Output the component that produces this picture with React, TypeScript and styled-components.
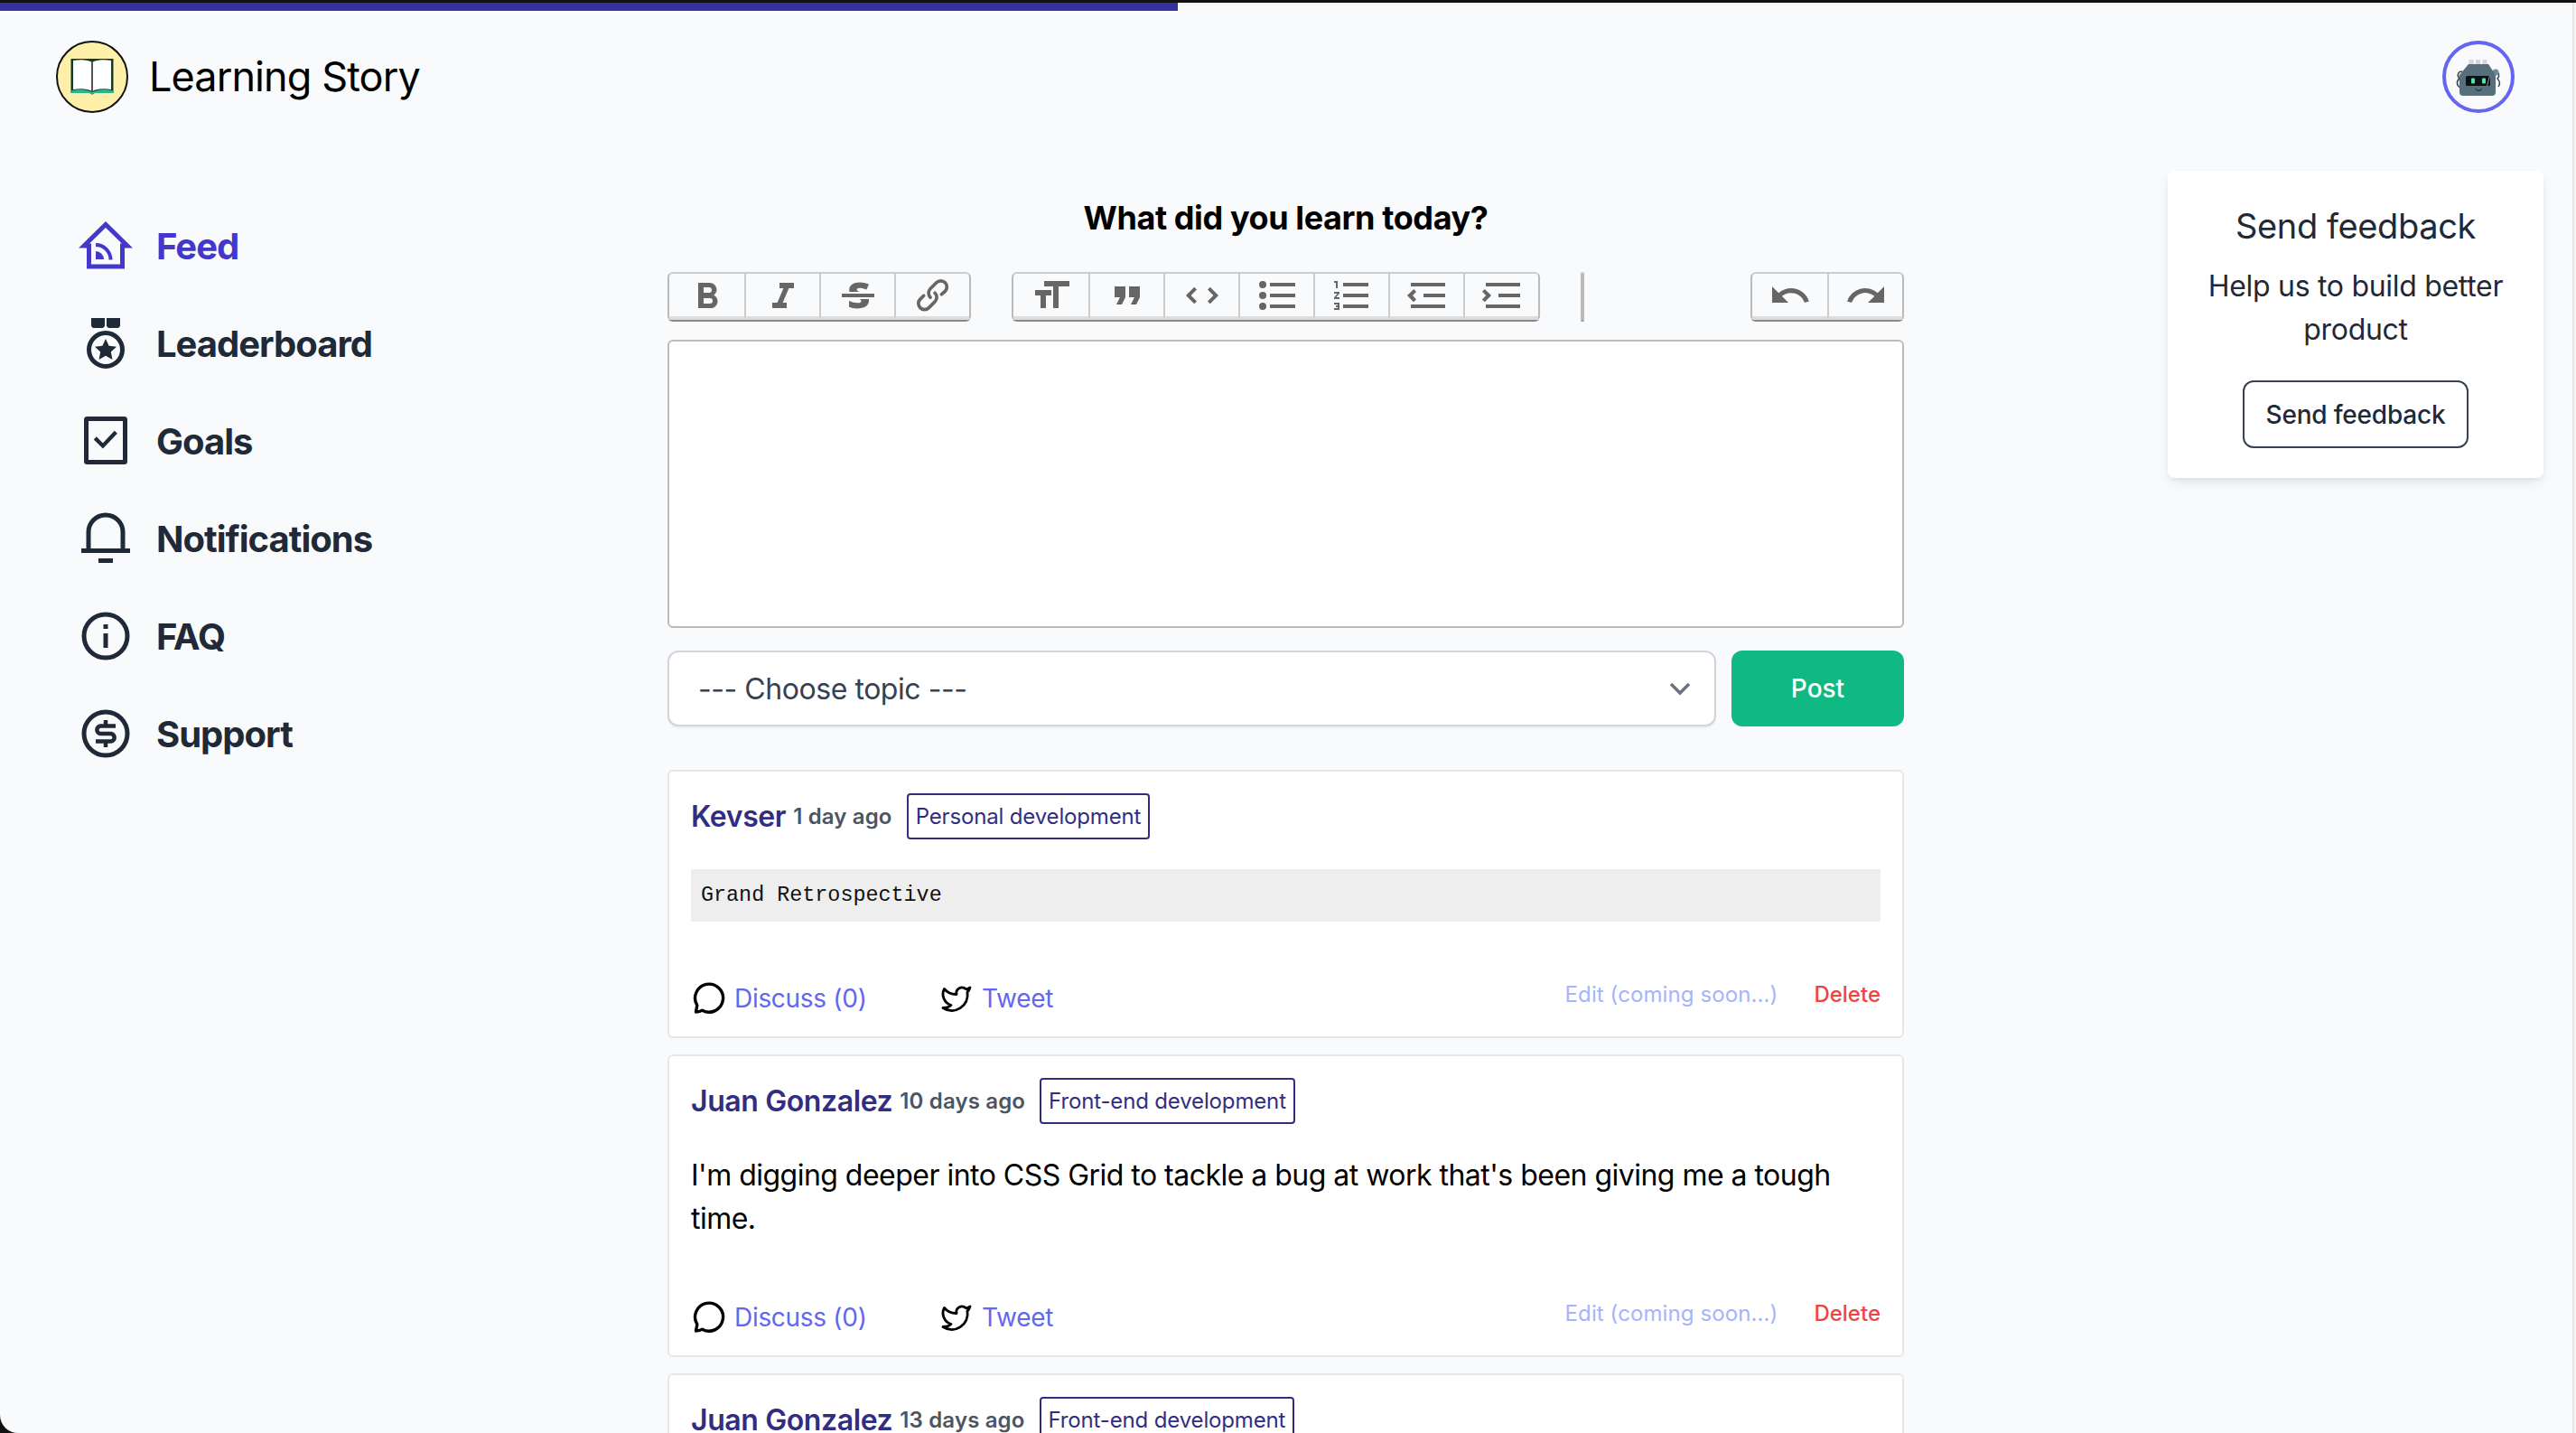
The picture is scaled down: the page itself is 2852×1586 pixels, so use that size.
import React from 'react';
import styled, { createGlobalStyle } from 'styled-components';
import { Twitter } from 'lucide-react';

const Global = createGlobalStyle`
  html, body { margin: 0; padding: 0; height: 100%; background: #000; }
  #root { height: 100%; }
  * { box-sizing: border-box; }
  body { font-family: Inter, "Liberation Sans", sans-serif; }
`;

const Frame = styled.div`
  height: 1586px;
  width: 2852px;
  overflow: hidden;
  background: #111;
  padding-top: 3px;
`;
const Window = styled.div`
  height: 1583px;
  background: #f9fafc;
  border-bottom-left-radius: 20px;
  overflow: hidden;
  display: flex;
  flex-direction: column;
  box-shadow: inset -2px 0 #f6f6f6, inset -4px 0 #e6e6e6;
`;
const Progress = styled.div`
  height: 9px;
  flex: none;
  background: #3730a3;
`;
const Header = styled.header`
  height: 146px;
  flex: none;
  display: flex;
  align-items: center;
  justify-content: space-between;
  padding: 0 68px 0 62px;
`;
const Brand = styled.div`
  display: flex;
  align-items: center;
  gap: 23px;
`;
const BrandMark = styled.div`
  width: 80px;
  height: 80px;
  border-radius: 50%;
  background: #fef0a8;
  border: 2px solid #111;
  display: flex;
  align-items: center;
  justify-content: center;
`;
const BrandName = styled.div`
  font-size: 45px;
  line-height: 60px;
  color: #000;
  letter-spacing: -0.9px;
`;
const Avatar = styled.div`
  width: 80px;
  height: 80px;
  border-radius: 50%;
  border: 4px solid #6366f1;
  display: flex;
  align-items: center;
  justify-content: center;
`;
const Main = styled.main`
  display: grid;
  grid-template-columns: 739px 1369px 292px 416px;
  flex: 1;
  min-height: 0;
`;
const Nav = styled.nav`
  padding: 84px 0 0 87px;
  display: flex;
  flex-direction: column;
  gap: 48px;
`;
const NavItem = styled.a<{ $active?: boolean }>`
  display: flex;
  align-items: center;
  gap: 26px;
  height: 60px;
  font-size: 40px;
  font-weight: 700;
  letter-spacing: -1px;
  color: ${p => (p.$active ? '#4338ca' : '#1f2937')};
  svg { flex: none; }
`;
const Center = styled.section`
  padding-top: 53px;
`;
const Title = styled.h1`
  margin: 0 0 30px;
  font-size: 36px;
  line-height: 60px;
  font-weight: 700;
  text-align: center;
  letter-spacing: -0.4px;
  color: #000;
`;
const Toolbar = styled.div`
  display: flex;
  gap: 45px;
  margin-bottom: 20px;
`;
const Spacer = styled.div`
  flex: 1;
`;
const Group = styled.div`
  display: flex;
  height: 55px;
  border: 2px solid #bbb;
  border-top-color: #ccc;
  border-bottom-color: #888;
  border-radius: 6px;
`;
const ToolButton = styled.div`
  width: 83px;
  height: 51px;
  display: flex;
  align-items: center;
  justify-content: center;
  border-bottom: 4px solid #ddd;
  & + & { border-left: 2px solid #ccc; }
  svg { fill: #666; }
`;
const Editor = styled.div`
  height: 319px;
  background: #fff;
  border: 2px solid #bbb;
  border-radius: 6px;
  margin-bottom: 25px;
`;
const ComposeRow = styled.div`
  display: flex;
  gap: 17px;
  margin-bottom: 48px;
`;
const TopicSelect = styled.div`
  flex: 1;
  height: 84px;
  background: #fff;
  border: 2px solid #d1d5db;
  border-radius: 12px;
  box-shadow: 0 2px 2px rgba(0, 0, 0, 0.05);
  display: flex;
  align-items: center;
  justify-content: space-between;
  padding: 0 24px 0 32px;
  font-size: 32px;
  letter-spacing: -0.45px;
  color: #374151;
`;
const PostButton = styled.button`
  width: 191px;
  height: 84px;
  border: 0;
  border-radius: 12px;
  background: #10b981;
  color: #fff;
  font: 500 28px Inter, sans-serif;
`;
const Feed = styled.div`
  display: flex;
  flex-direction: column;
  gap: 18px;
`;
const Card = styled.article`
  flex: none;
  background: #fff;
  border: 2px solid #e5e7eb;
  border-radius: 6px;
  padding: 24px 24px 17px;
`;
const CardHead = styled.div`
  display: flex;
  align-items: center;
  height: 51px;
  margin-bottom: 33px;
`;
const Author = styled.span`
  font-size: 32px;
  font-weight: 600;
  letter-spacing: -0.4px;
  color: #312e81;
  margin-right: 8px;
`;
const Ago = styled.span`
  font-size: 24px;
  font-weight: 600;
  letter-spacing: 0.15px;
  color: #4b5563;
  margin-right: 16px;
`;
const Tag = styled.span`
  height: 51px;
  padding: 0 8px;
  border: 2px solid #312e81;
  border-radius: 4px;
  display: flex;
  align-items: center;
  font-size: 24px;
  letter-spacing: -0.15px;
  color: #312e81;
`;
const Code = styled.pre`
  margin: 0;
  height: 58px;
  padding: 0 11px;
  background: #eee;
  font: 23.4px/58px "Liberation Mono", monospace;
  color: #111;
`;
const Body = styled.p`
  margin: 0;
  font-size: 32px;
  line-height: 48px;
  letter-spacing: -0.52px;
  color: #000;
`;
const Actions = styled.div`
  display: flex;
  align-items: center;
  justify-content: space-between;
  height: 50px;
  margin-top: 60px;
`;
const ActionGroup = styled.div`
  display: flex;
  align-items: center;
`;
const ActionLink = styled.a<{ $wide?: boolean }>`
  display: flex;
  align-items: center;
  gap: 10px;
  font-size: 28px;
  letter-spacing: -0.3px;
  color: #6366f1;
  width: ${p => (p.$wide ? '274px' : 'auto')};
  padding-left: 2px;
`;
const SideActions = styled.div`
  display: flex;
  align-items: center;
  gap: 40px;
  font-size: 24px;
  margin-bottom: 9px;
`;
const EditLink = styled.span`
  color: #a5b4fc;
  letter-spacing: 0.1px;
`;
const DeleteLink = styled.span`
  color: #ef4444;
  font-weight: 500;
`;
const Aside = styled.aside`
  padding-top: 31px;
`;
const FeedbackCard = styled.div`
  height: 340px;
  background: #fff;
  border-radius: 8px;
  box-shadow: 0 6px 12px -2px rgba(0, 0, 0, 0.1), 0 2px 6px -2px rgba(0, 0, 0, 0.05);
  display: flex;
  flex-direction: column;
  align-items: center;
  text-align: center;
  padding: 36px 40px 0;
  color: #1f2937;
`;
const FeedbackTitle = styled.h2`
  margin: 0 0 18px;
  font-size: 38px;
  line-height: 50px;
  font-weight: 400;
  letter-spacing: -0.4px;
`;
const FeedbackText = styled.p`
  margin: 0 0 32px;
  font-size: 32px;
  line-height: 48px;
  letter-spacing: -0.3px;
`;
const FeedbackButton = styled.button`
  width: 250px;
  height: 75px;
  background: #fff;
  border: 2px solid #374151;
  border-radius: 12px;
  color: #1f2937;
  font: 500 28px Inter, sans-serif;
  letter-spacing: -0.2px;
`;

const Ic: React.FC<{ d: string | string[] }> = ({ d }) => (
  <svg width="48" height="48" viewBox="0 0 24 24">
    {(Array.isArray(d) ? d : [d]).map((x, i) => <path key={i} d={x} />)}
  </svg>
);

const I = {
  bold: 'M15.6 11.79c.97-.67 1.65-1.77 1.65-2.79 0-2.26-1.75-4-4-4H7v14h7.04c2.09 0 3.71-1.7 3.71-3.79 0-1.52-.86-2.82-2.15-3.42zM10 7.5h3a1.5 1.5 0 1 1 0 3h-3v-3zm3.5 9H10v-3h3.5a1.5 1.5 0 1 1 0 3z',
  italic: 'M10 5v3h2.2l-3.4 8H6v3h8v-3h-2.2l3.4-8H18V5h-8z',
  strike: 'M12.73 14l.28.14c.26.15.45.3.57.44.12.14.18.3.18.5 0 .3-.15.56-.44.75-.3.2-.76.3-1.39.3A13.52 13.52 0 0 1 7 14.95v3.37a10.64 10.64 0 0 0 4.84.88c1.26 0 2.35-.19 3.28-.56.93-.37 1.64-.9 2.14-1.57s.74-1.45.74-2.32c0-.26-.02-.51-.06-.75h-5.21zm-5.5-4c-.08-.34-.12-.7-.12-1.1 0-1.29.52-2.3 1.58-3.02 1.05-.72 2.5-1.08 4.34-1.08 1.62 0 3.28.34 4.97 1l-1.3 2.93c-1.47-.6-2.73-.9-3.8-.9-.55 0-.96.08-1.2.26-.26.17-.38.38-.38.64 0 .27.16.52.48.74.17.12.53.3 1.05.53H7.23zM3 13h18v-2H3v2z',
  link: [
    'M9.88 13.7a4.3 4.3 0 0 1 0-6.07l3.37-3.37a4.26 4.26 0 0 1 6.07 0 4.3 4.3 0 0 1 0 6.06l-1.96 1.72a.91.91 0 1 1-1.3-1.3l1.97-1.71a2.46 2.46 0 0 0-3.48-3.48l-3.38 3.37a2.46 2.46 0 0 0 0 3.48.91.91 0 1 1-1.3 1.3z',
    'M4.25 19.46a4.3 4.3 0 0 1 0-6.07l1.93-1.9a.91.91 0 1 1 1.3 1.3l-1.93 1.9a2.46 2.46 0 0 0 3.48 3.48l3.37-3.38c.96-.96.96-2.52 0-3.48a.91.91 0 1 1 1.3-1.3 4.3 4.3 0 0 1 0 6.07l-3.38 3.38a4.26 4.26 0 0 1-6.07 0z',
  ],
  heading: 'M12 9v3H9v7H6v-7H3V9h9zM8 4h14v3h-6v12h-3V7H8V4z',
  quote: 'M6 17h3l2-4V7H5v6h3zm8 0h3l2-4V7h-6v6h3z',
  code: 'M18.2 12L15 15.2l1.4 1.4L21 12l-4.6-4.6L15 8.8l3.2 3.2zM5.8 12L9 8.8 7.6 7.4 3 12l4.6 4.6L9 15.2 5.8 12z',
  bullets: 'M4 4a2 2 0 1 0 0 4 2 2 0 0 0 0-4zm0 6a2 2 0 1 0 0 4 2 2 0 0 0 0-4zm0 6a2 2 0 1 0 0 4 2 2 0 0 0 0-4zm4 3h14v-2H8v2zm0-6h14v-2H8v2zm0-8v2h14V5H8z',
  numbers: 'M2 17h2v.5H3v1h1v.5H2v1h3v-4H2v1zm1-9h1V4H2v1h1v3zm-1 3h1.8L2 13.1v.9h3v-1H3.2L5 10.9V10H2v1zm5-6v2h14V5H7zm0 14h14v-2H7v2zm0-6h14v-2H7v2z',
  decrease: 'M3 19h19v-2H3v2zm7-6h12v-2H10v2zm-8.3-.3l2.8 2.9L6 14.2 4 12l2-2-1.4-1.5L1 12l.7.7zM3 5v2h19V5H3z',
  increase: 'M3 19h19v-2H3v2zm7-6h12v-2H10v2zm-6.9-1L1 14.2l1.4 1.4L6 12l-.7-.7-2.9-2.8L1 9.9 3.1 12zM3 5v2h19V5H3z',
  undo: 'M12.5 8c-2.6 0-5 1-6.9 2.6L2 7v9h9l-3.6-3.6A8 8 0 0 1 20 16l2.4-.8a10.5 10.5 0 0 0-9.9-7.2z',
  redo: 'M18.4 10.6a10.5 10.5 0 0 0-16.9 4.6L4 16a8 8 0 0 1 12.7-3.6L13 16h9V7l-3.6 3.6z',
};

const NavSvg: React.FC<{ color: string; children: React.ReactNode }> = ({ color, children }) => (
  <svg width="60" height="60" viewBox="0 0 60 60" fill="none" stroke={color} strokeWidth="5">
    {children}
  </svg>
);

const Icons = {
  feed: (c: string) => (
    <NavSvg color={c}>
      <path d="M11.5 30H6L30 6.5 54 30h-5.5v23h-37z" strokeLinejoin="miter" />
      <path d="M19 36a9 9 0 0 1 9 9h-9z" fill={c} stroke="none" />
      <path d="M19 29a16.5 16.5 0 0 1 16.5 16.5" strokeWidth="4" />
    </NavSvg>
  ),
  medal: (c: string) => (
    <NavSvg color={c}>
      <path d="M14 2h15v9l-2 2H16l-2-2zM31 2h15v9l-2 2H33l-2-2z" fill={c} stroke="none" />
      <circle cx="30" cy="37" r="18.5" />
      <path d="M30 25l3.6 7.8 8.4 1-6.2 5.800 1.700 8.400-7.500-4.200-7.500 4.200 1.700-8.400-6.200-5.800 8.400-1z" fill={c} stroke="none" />
    </NavSvg>
  ),
  goals: (c: string) => (
    <NavSvg color={c}>
      <rect x="8.5" y="5.5" width="43" height="48" rx="1" />
      <path d="M18 28l9 9 15-16" transform="translate(1 0) scale(.96 .96)" strokeWidth="4.5" />
    </NavSvg>
  ),
  bell: (c: string) => (
    <NavSvg color={c}>
      <path d="M11 43V23a19 19 0 0 1 38 0v20" />
      <path d="M3 43.5h54" />
      <path d="M22 54.5h16" />
    </NavSvg>
  ),
  info: (c: string) => (
    <NavSvg color={c}>
      <circle cx="30" cy="30" r="24" />
      <path d="M30 17v5M30 27v16" />
    </NavSvg>
  ),
  dollar: (c: string) => (
    <NavSvg color={c}>
      <circle cx="30" cy="30" r="24" />
      <path d="M41 21.5H24a4.3 4.3 0 0 0 0 8.5h12a4.3 4.3 0 0 1 0 8.5H19M30 15v6M30 39v6" strokeWidth="4.5" />
    </NavSvg>
  ),
};

const BookLogo = () => (
  <svg width="50" height="44" viewBox="0 0 50 44">
    <path d="M1.5 2v38h20c2 0 3 1 3.5 2 .5-1 1.5-2 3.5-2h20V2z" fill="#0f3d2e" />
    <path d="M1.5 40v-2.5c8-2.5 16-2 23.5 1.5 7.5-3.5 15.5-4 23.5-1.5V40h-20c-2 0-3 1-3.5 2-.5-1-1.5-2-3.5-2z" fill="#2bb58c" />
    <path d="M4 4c9-1.500 16-1 21 2 5-3 12-3.500 21-2v32c-8-1.500-16-1-21 2-5-3-13-3.500-21-2z" fill="#fff" />
    <path d="M25 5v34" stroke="#555" strokeWidth="2" />
  </svg>
);

const RobotAvatar = () => (
  <svg width="72" height="72" viewBox="0 0 72 72">
    <path d="M18 30c-5 0-6 5-3 8-4 3-3 8 1 10" fill="none" stroke="#3d4b54" strokeWidth="1.6" />
    <path d="M54 30c5 1 6 5 3 8 3 3 3 7 1 9" fill="none" stroke="#3d4b54" strokeWidth="1.6" />
    <circle cx="55" cy="31" r="3.5" fill="#6f8a96" />
    <rect x="25.5" y="17" width="5" height="6" rx="1" fill="#cfd6dc" />
    <rect x="33" y="17" width="5" height="6" rx="1" fill="#cfd6dc" />
    <rect x="40.5" y="17" width="5" height="6" rx="1" fill="#cfd6dc" />
    <path d="M25 22h22l8 12v19a4 4 0 0 1-4 4H19a4 4 0 0 1-4-4V34z" fill="#566f7b" />
    <rect x="22" y="35" width="27" height="11" rx="1.5" fill="#0b1114" />
    <rect x="28" y="37.5" width="4" height="6" rx="1" fill="#4fe3a8" />
    <rect x="40" y="37.5" width="4" height="6" rx="1" fill="#4fe3a8" />
    <path d="M45.5 46l3-11" stroke="#8a9aa3" strokeWidth="1" />
    <path d="M33 49.5c1.5 2.5 5 2.5 6.5 0" fill="none" stroke="#1d2a30" strokeWidth="1.2" />
  </svg>
);

const DiscussIcon = () => (
  <svg width="36" height="36" viewBox="0 0 36 36" fill="none" stroke="#000" strokeWidth="3.4">
    <path d="M3.5 33l1.3-7.300A15.500 15.500 0 1 1 10.500 31.200c-2.400 1.600-4.500 1.800-7 1.800z" strokeLinejoin="round" />
  </svg>
);

const PostActions = () => (
  <Actions>
    <ActionGroup>
      <ActionLink $wide><DiscussIcon /> Discuss (0)</ActionLink>
      <ActionLink><Twitter size={36} color="#000" strokeWidth={1.9} /> Tweet</ActionLink>
    </ActionGroup>
    <SideActions>
      <EditLink>Edit (coming soon...)</EditLink>
      <DeleteLink>Delete</DeleteLink>
    </SideActions>
  </Actions>
);

export default function App() {
  return (
    <Frame>
      <Global />
      <Window>
        <Progress style={{ width: 1304 }} />
        <Header>
          <Brand>
            <BrandMark><BookLogo /></BrandMark>
            <BrandName>Learning Story</BrandName>
          </Brand>
          <Avatar><RobotAvatar /></Avatar>
        </Header>
        <Main>
          <Nav>
            <NavItem $active>{Icons.feed('#4338ca')}Feed</NavItem>
            <NavItem>{Icons.medal('#1f2937')}Leaderboard</NavItem>
            <NavItem>{Icons.goals('#1f2937')}Goals</NavItem>
            <NavItem>{Icons.bell('#1f2937')}Notifications</NavItem>
            <NavItem>{Icons.info('#1f2937')}FAQ</NavItem>
            <NavItem>{Icons.dollar('#1f2937')}Support</NavItem>
          </Nav>
          <Center>
            <Title>What did you learn today?</Title>
            <Toolbar>
              <Group>
                <ToolButton><Ic d={I.bold} /></ToolButton>
                <ToolButton><Ic d={I.italic} /></ToolButton>
                <ToolButton><Ic d={I.strike} /></ToolButton>
                <ToolButton><Ic d={I.link} /></ToolButton>
              </Group>
              <Group>
                <ToolButton><Ic d={I.heading} /></ToolButton>
                <ToolButton><Ic d={I.quote} /></ToolButton>
                <ToolButton><Ic d={I.code} /></ToolButton>
                <ToolButton><Ic d={I.bullets} /></ToolButton>
                <ToolButton><Ic d={I.numbers} /></ToolButton>
                <ToolButton><Ic d={I.decrease} /></ToolButton>
                <ToolButton><Ic d={I.increase} /></ToolButton>
              </Group>
              <Group />
              <Spacer />
              <Group>
                <ToolButton><Ic d={I.undo} /></ToolButton>
                <ToolButton><Ic d={I.redo} /></ToolButton>
              </Group>
            </Toolbar>
            <Editor />
            <ComposeRow>
              <TopicSelect>
                --- Choose topic ---
                <svg width="28" height="28" viewBox="0 0 28 28" fill="none" stroke="#6b7280" strokeWidth="3.5">
                  <path d="M4 9l10 10L24 9" />
                </svg>
              </TopicSelect>
              <PostButton>Post</PostButton>
            </ComposeRow>
            <Feed>
              <Card>
                <CardHead>
                  <Author>Kevser</Author>
                  <Ago>1 day ago</Ago>
                  <Tag>Personal development</Tag>
                </CardHead>
                <Code>Grand Retrospective</Code>
                <PostActions />
              </Card>
              <Card>
                <CardHead>
                  <Author>Juan Gonzalez</Author>
                  <Ago>10 days ago</Ago>
                  <Tag>Front-end development</Tag>
                </CardHead>
                <Body>I'm digging deeper into CSS Grid to tackle a bug at work that's been giving me a tough time.</Body>
                <PostActions />
              </Card>
              <Card>
                <CardHead>
                  <Author>Juan Gonzalez</Author>
                  <Ago>13 days ago</Ago>
                  <Tag>Front-end development</Tag>
                </CardHead>
              </Card>
            </Feed>
          </Center>
          <div />
          <Aside>
            <FeedbackCard>
              <FeedbackTitle>Send feedback</FeedbackTitle>
              <FeedbackText>Help us to build better product</FeedbackText>
              <FeedbackButton>Send feedback</FeedbackButton>
            </FeedbackCard>
          </Aside>
        </Main>
      </Window>
    </Frame>
  );
}
